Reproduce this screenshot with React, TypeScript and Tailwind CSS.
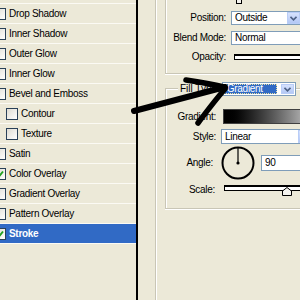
import React from "react";

const styles = [
  { name: "Drop Shadow" },
  { name: "Inner Shadow" },
  { name: "Outer Glow" },
  { name: "Inner Glow" },
  { name: "Bevel and Emboss" },
  { name: "Contour", sub: true },
  { name: "Texture", sub: true },
  { name: "Satin" },
  { name: "Color Overlay", checked: true },
  { name: "Gradient Overlay" },
  { name: "Pattern Overlay" },
  { name: "Stroke", checked: true, selected: true },
];

const Check = ({ checked }: { checked?: boolean }) => (
  <div className="w-[12px] h-[12px] shrink-0 border border-[#2a4158] bg-gradient-to-br from-[#dedcd2] to-white flex items-center justify-center">
    {checked && (
      <svg width="8" height="8" viewBox="0 0 8 8">
        <path d="M1 4 L3 6.5 L7 1.5" fill="none" stroke="#21a121" strokeWidth="2" />
      </svg>
    )}
  </div>
);

const ComboArrow = () => (
  <div className="w-[13px] h-full shrink-0 bg-gradient-to-b from-[#d6e2fd] to-[#b4c8f5] border border-[#b9cdf7] flex items-center justify-center">
    <svg width="7" height="5" viewBox="0 0 7 5">
      <path d="M0.5 0.8 L3.5 3.8 L6.5 0.8" fill="none" stroke="#4d6185" strokeWidth="1.6" />
    </svg>
  </div>
);

const Track = ({ width }: { width: string }) => (
  <div className={`${width} h-[6px] border border-black border-t-2 bg-white`} />
);

const App = () => {
  return (
    <div className="w-[300px] h-[300px] bg-[#ece9d8] flex relative overflow-hidden font-['Liberation_Sans',Arial,sans-serif] text-[10px] leading-none tracking-[-0.3px] text-black">
      {/* style list */}
      <div className="w-[138px] shrink-0 border-r-2 border-black flex flex-col">
        <div className="h-[4px] border-b border-[#fbfaf4]" />
        {styles.map((s, i) => (
          <div
            key={i}
            className={`h-[20px] border-b border-[#fbfaf4] flex items-center gap-[3px] ${
              s.sub ? "pl-[6px] gap-[2px]" : "-ml-[6px]"
            } ${s.selected ? "bg-[#316ac5] text-white font-bold" : ""}`}
          >
            <Check checked={s.checked} />
            <span>{s.name}</span>
          </div>
        ))}
      </div>

      {/* options */}
      <div className="flex-1 overflow-hidden">
        <div className="ml-[17px] h-full border-l border-[#c9c6b6] shadow-[inset_1px_0_0_white] pl-[9px]">
          {/* structure box */}
          <div className="w-[200px] border-l border-b border-[#c9c6b6] shadow-[inset_1px_0_0_white,0_1px_0_white] flex flex-col pb-[9px]">
            <div className="h-[4px] pl-[70px]">
              <div className="w-[6px] h-[4px] border-x border-b border-black bg-[#f4f3ee]" />
            </div>
            <div className="mt-[7px] h-[14px] flex items-center gap-[5px]">
              <span className="w-[60px] text-right">Position:</span>
              <div className="w-[70px] h-full border border-[#7f9db9] bg-white flex items-center">
                <span className="flex-1 pl-[3px]">Outside</span>
                <ComboArrow />
              </div>
            </div>
            <div className="mt-[6px] h-[14px] flex items-center gap-[5px]">
              <span className="w-[60px] text-right">Blend Mode:</span>
              <div className="w-[80px] h-full border border-[#7f9db9] bg-white flex items-center pl-[3px]">
                Normal
              </div>
            </div>
            <div className="mt-[5px] h-[14px] flex items-center gap-[5px]">
              <span className="w-[60px] text-right">Opacity:</span>
              <div className="pl-[3px]">
                <Track width="w-[80px]" />
              </div>
            </div>
          </div>

          {/* fill box */}
          <div className="mt-[14px] w-[200px] border-l border-t border-b border-[#c9c6b6] shadow-[inset_1px_1px_0_white,0_1px_0_white] flex flex-col pb-[11px]">
            <div className="-mt-[7px] h-[14px] flex items-center pl-[12px]">
              <div className="bg-[#ece9d8] px-[2px] py-[2px] tracking-normal">Fill Type:</div>
              <div className="w-[74px] h-full border border-[#7f9db9] bg-white flex items-center p-[1px] gap-[2px]">
                <div className="w-[56px] h-full bg-[#316ac5] text-white flex items-center pl-[2px] border border-dotted border-[#e8dfa0]">
                  Gradient
                </div>
                <div className="flex-1" />
                <ComboArrow />
              </div>
            </div>

            <div className="mt-[13px] h-[15px] flex items-center gap-[5px]">
              <span className="w-[50px] text-right">Gradient:</span>
              <div className="ml-[2px] w-[90px] h-full border border-[#404040] bg-gradient-to-r from-black to-[#c8c8c8]" />
            </div>

            <div className="mt-[5px] h-[15px] flex items-center gap-[5px]">
              <span className="w-[50px] text-right">Style:</span>
              <div className="w-[91px] h-full border border-[#7f9db9] bg-white flex items-center">
                <span className="flex-1 pl-[3px]">Linear</span>
                <ComboArrow />
              </div>
            </div>

            <div className="mt-[2px] h-[34px] flex items-center gap-[5px]">
              <span className="w-[47px] mr-[3px] text-right">Angle:</span>
              <svg width="34" height="34" viewBox="0 0 34 34" className="shrink-0">
                <circle cx="17" cy="17" r="15.5" fill="none" stroke="black" strokeWidth="2" />
                <line x1="17" y1="17" x2="17" y2="2" stroke="black" strokeWidth="1.2" />
                <circle cx="17" cy="17" r="1.6" fill="black" />
              </svg>
              <div className="ml-[1px] w-[50px] h-[16px] border border-[#7f9db9] bg-white flex items-center pl-[3px]">
                90
              </div>
            </div>

            <div className="mt-[3px] h-[14px] flex items-center gap-[5px]">
              <span className="w-[49px] text-right">Scale:</span>
              <div className="ml-[4px] relative h-full">
                <div className="mt-[2px]">
                  <Track width="w-[80px]" />
                </div>
                <svg width="10" height="9" viewBox="0 0 10 9" className="absolute left-[58px] top-[4px]">
                  <path d="M0.5 8.5 L0.5 4 L5 0.5 L9.5 4 L9.5 8.5 Z" fill="#f4f3ee" stroke="black" strokeWidth="1" />
                </svg>
              </div>
            </div>
          </div>
        </div>
      </div>

      {/* hand drawn arrow */}
      <svg width="300" height="300" viewBox="0 0 300 300" className="absolute inset-0 pointer-events-none">
        <g fill="none" stroke="black" strokeLinecap="round" strokeLinejoin="round">
          <path d="M134 111 C 165 103, 195 95, 225 87" strokeWidth="6" />
          <path d="M186 80 C 200 82, 212 84, 224 87" strokeWidth="5.5" />
          <path d="M198 123 C 207 111, 216 99, 225 89" strokeWidth="5.5" />
        </g>
      </svg>
    </div>
  );
};

export default App;
